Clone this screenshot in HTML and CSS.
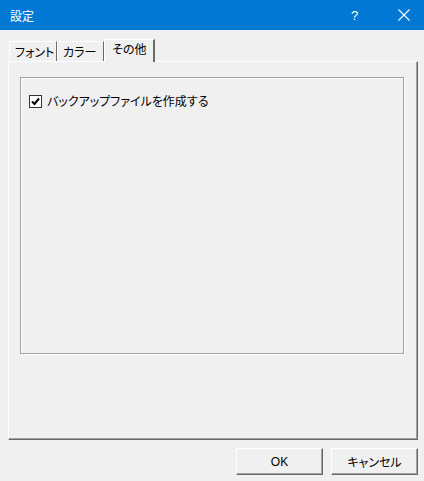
FILE: index.html
```html
<!DOCTYPE html>
<html lang="ja">
<head>
<meta charset="utf-8">
<link rel="stylesheet" href="styles.css">
</head>
<body>
<div class="window">
  <div class="titlebar">
    <span class="title">設定</span>
    <span class="help">?</span>
    <span class="close">
      <svg width="12" height="12" viewBox="0 0 12 12"><path d="M0.5 0.5 L11.5 11.5 M11.5 0.5 L0.5 11.5" stroke="#fff" stroke-width="1.1" fill="none"/></svg>
    </span>
  </div>
  <div class="content">
    <div class="tabs">
      <div class="tab t1">フォント</div>
      <div class="tab t2">カラー</div>
      <div class="tab active">その他</div>
    </div>
    <div class="panel">
      <div class="group">
        <label class="check">
          <span class="box">
            <svg width="9" height="9" viewBox="0 0 9 9"><path d="M1 4.5 L3.5 7 L8 1.5" stroke="#000" stroke-width="2" fill="none"/></svg>
          </span>
          <span class="label">バックアップファイルを作成する</span>
        </label>
      </div>
    </div>
    <div class="buttons">
      <button class="btn ok">OK</button>
      <button class="btn">キャンセル</button>
    </div>
  </div>
</div>
</body>
</html>
```

FILE: styles.css
```css
* { box-sizing: border-box; }
html, body { margin: 0; padding: 0; }
body {
  width: 424px;
  height: 481px;
  overflow: hidden;
  font-family: "Noto Sans CJK JP", "Noto Sans", sans-serif;
  font-size: 12px;
  font-feature-settings: "palt";
  color: #000;
  background: #f0f0f0;
}
.window {
  width: 424px;
  height: 481px;
  display: flex;
  flex-direction: column;
  background: #f0f0f0;
}
.titlebar {
  height: 30px;
  background: #0078d4;
  color: #fff;
  display: flex;
  align-items: center;
  padding-left: 10px;
  flex-shrink: 0;
}
.title { font-size: 12px; flex: 1; font-feature-settings: normal; }
.help { font-size: 13px; width: 20px; margin-right: 27px; font-family: "Liberation Sans", sans-serif; }
.close { width: 14px; margin-right: 12px; display: flex; align-items: center; }
.content {
  padding: 9px 6px 0 8px;
  display: flex;
  flex-direction: column;
}
.tabs {
  display: flex;
  align-items: flex-end;
  height: 22px;
  padding-left: 1px;
  position: relative;
  z-index: 1;
}
.tab {
  height: 20px;
  border-top: 1px solid #fff;
  border-left: 1px solid #fff;
  border-right: 1px solid #696969;
  line-height: 20px;
  white-space: nowrap;
  padding-left: 5px;
}
.t1 { width: 48px; }
.t2 { width: 47px; }
.tab.active {
  height: 23px;
  margin-bottom: -1px;
  width: 51px;
  padding-left: 7px;
  line-height: 17px;
  background: #f0f0f0;
  border-right: 2px solid #696969;
}
.panel {
  height: 379px;
  width: 410px;
  border-top: 1px solid #fff;
  border-left: 1px solid #fff;
  border-right: 1px solid #696969;
  border-bottom: 1px solid #696969;
  box-shadow: inset -1px -1px 0 #a0a0a0;
  padding: 15px 13px 0 11px;
}
.group {
  height: 277px;
  border: 1px solid #a0a0a0;
  box-shadow: 1px 1px 0 #fff, inset 1px 1px 0 #fff;
  padding: 16px 0 0 8px;
}
.check {
  display: flex;
  align-items: center;
  height: 14px;
}
.box {
  width: 13px;
  height: 13px;
  border: 1px solid #333;
  background: #fff;
  display: flex;
  align-items: center;
  justify-content: center;
  margin-right: 5px;
}
.label { line-height: 14px; }
.buttons {
  display: flex;
  justify-content: flex-end;
  gap: 8px;
  margin-top: 8px;
}
.btn {
  width: 87px;
  height: 27px;
  font-family: "Noto Sans CJK JP", "Noto Sans", sans-serif;
  font-size: 12px;
  font-feature-settings: "palt";
  background: #f0f0f0;
  border: 1px solid #696969;
  border-top-color: #fff;
  border-left-color: #fff;
  box-shadow: inset -1px -1px 0 #a0a0a0;
  padding: 0;
  color: #000;
}
.ok { font-family: "Liberation Sans", sans-serif; font-size: 12px; }
```
